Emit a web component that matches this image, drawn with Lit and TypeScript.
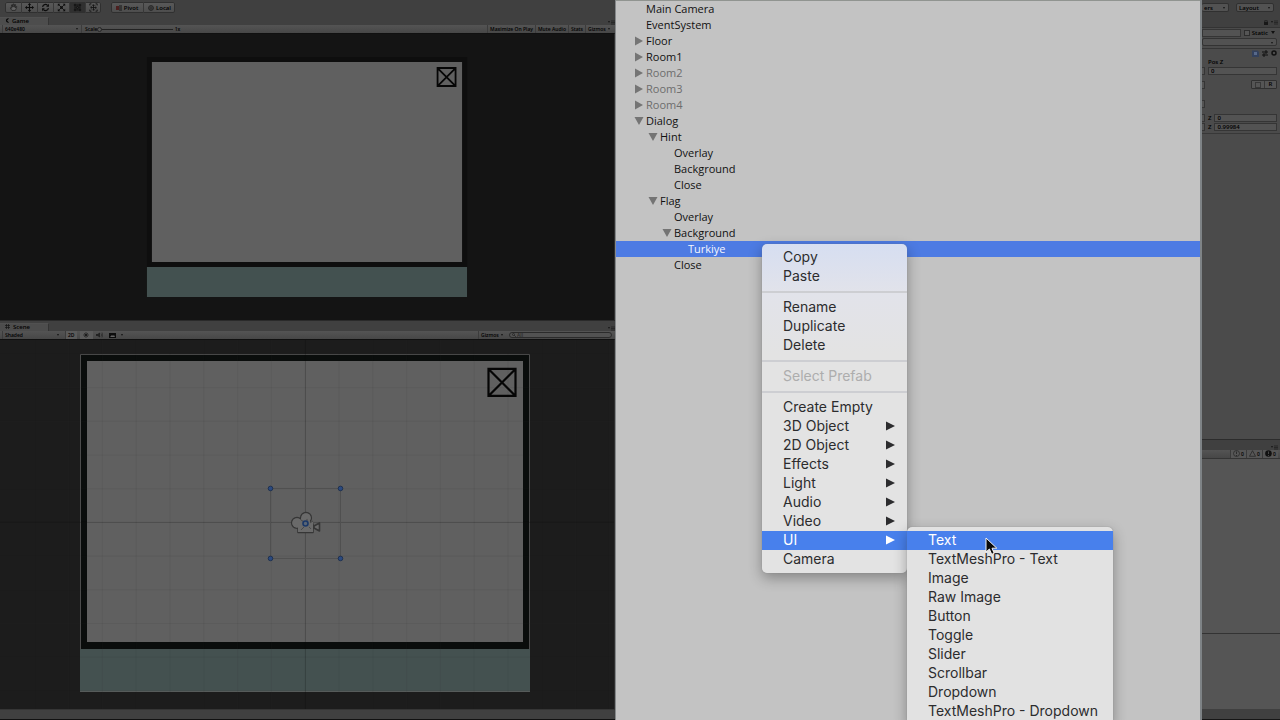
import { LitElement, html, css, svg, nothing } from "lit";
import { customElement, property } from "lit/decorators.js";
import { classMap } from "lit/directives/class-map.js";
import { styleMap } from "lit/directives/style-map.js";

const controls = css`
  *, *::before, *::after { box-sizing: border-box; }
  button, select, input {
    appearance: none; margin: 0; padding: 0; border: 0; border-radius: 0;
    background: none; color: inherit; font: inherit; min-width: 0; outline: none;
  }
  svg { display: block; flex: none; }
  .strip { display: flex; flex: none; align-items: flex-end; justify-content: space-between; background: #404040; }
  .tab {
    display: flex; align-items: center; gap: 3px; width: 49px; height: 8px; padding-left: 5px;
    padding-bottom: 2px; line-height: 6px; background: #4d4d4d; border-right: 1px solid #343434; border-top: 1px solid #515151;
  }
  .bar {
    display: flex; flex: none; height: 8px; padding-left: 2px; padding-right: 2px;
    background: linear-gradient(#545454, #474747); font-size: 5px; line-height: 8px;
  }
  .field { position: relative; display: flex; align-items: center; }
  .field::after {
    content: ""; position: absolute; right: 3px; top: 3px;
    border: 1px solid transparent; border-top: 2px solid #151515; border-bottom: 0;
  }
`;

const menuIcon = svg`<svg width="7" height="5" viewBox="0 0 7 5"><path d="M0 1h2L1 3z" fill="#161616"/><path d="M3 1h4M3 2.5h4M3 4h4" stroke="#222" stroke-width=".8"/></svg>`;

@customElement("editor-views")
class EditorViews extends LitElement {
  static styles = [controls, css`
    :host {
      display: flex; flex-direction: column; min-width: 0; min-height: 0; background: #404040;
      color: #000; font: 600 6px/8px "Open Sans", "Noto Sans", sans-serif;
    }
    .toolbar { display: flex; flex: none; height: 16px; padding: 2px 5px; gap: 10px; }
    .group { display: flex; height: 11px; border-radius: 2px; background: linear-gradient(#5a5a5a, #4c4c4c); box-shadow: inset 0 0 0 1px #303030; }
    .tool { display: flex; align-items: center; justify-content: center; width: 16px; border-left: 1px solid #383838; }
    .tool:first-child, .mode:first-child { border-left: 0; }
    .on { background: #303030; }
    .mode { display: flex; align-items: center; justify-content: center; gap: 2px; width: 32px; border-left: 1px solid #383838; }
    .cell { padding: 0 2px; border-left: 1px solid #3c3c3c; white-space: nowrap; }
    .res { width: 80px; border-left: 1px solid #3c3c3c; border-right: 1px solid #3c3c3c; padding-left: 2px; }
    .res select { width: 100%; }
    .shaded { width: 60px; }
    .scale { display: flex; align-items: center; padding-left: 3px; }
    .scale input { width: 76px; height: 6px; }
    .scale input::-webkit-slider-runnable-track { height: 1px; background: #222; }
    .scale input::-webkit-slider-thumb { appearance: none; width: 5px; height: 5px; margin-top: -2px; border: 1px solid #252525; border-radius: 50%; background: #555; }
    .spring { flex: 1; }
    .gap { width: 3px; }
    .lit { background: #5b5b5b; }
    .icon { display: flex; align-items: center; justify-content: center; width: 13px; }
    .drop { width: 7px; }
    .gizmos { width: 28px; }
    .search { display: flex; align-items: center; width: 103px; height: 6px; margin: 1px 1px 0 3px; padding: 0 2px; gap: 1px; border: 1px solid #2b2b2b; border-radius: 3px; background: #525252; }
    .search input { width: 80%; height: 4px; line-height: 4px; }
    .search input::placeholder { color: #2b2b2b; }
    .view { min-height: 0; border-top: 1px solid #101010; border-right: 1px solid #303030; }
    .game { flex: 287; background: #141414; }
    .scene { flex: 370; background: #1c1c1c; }
    .view svg { width: 100%; height: 100%; }
    .scenestrip { border-top: 1px solid #2a2a2a; height: 11px; }
    .gamestrip { height: 9px; }
    .status { flex: none; height: 11px; border-top: 1px solid #353535; border-bottom: 1px solid #111; background: #404040; }
  `];

  render() {
    const tools = [
      svg`<path d="M3.5 9 1.5 6 2.5 5.5 3.5 6.5 3 2.5 4 2 4.7 5 5 1.2h1L6.2 5 7 1.8 8 2 7.5 6 9 4l.7.6L7.8 9z" fill="#666" stroke="#1a1a1a" stroke-width=".8"/>`,
      svg`<path d="M5.5 1v9M1 5.5h9" stroke="#0c0c0c" stroke-width="1.4"/><path d="M5.5 0 7.5 2.5h-4zM5.5 11 3.5 8.5h4zM0 5.5 2.5 3.5v4zM11 5.5 8.5 3.5v4z" fill="#0c0c0c"/>`,
      svg`<path d="M2 5a3.4 3.4 0 0 1 6-2M9 6a3.4 3.4 0 0 1-6 2" fill="none" stroke="#0c0c0c" stroke-width="1.4"/><path d="M9.7 1v3.5H6.3zM1.300 10V6.500H4.700z" fill="#0c0c0c"/>`,
      svg`<path d="M2 2 9 9M9 2 2 9" stroke="#0c0c0c"/><path d="M4 4h3v3H4z" fill="#0c0c0c"/><path d="M1 1h3L1 4zM10 1v3L7 1zM1 10V7l3 3zM10 10H7l3-3z" fill="#0c0c0c"/>`,
      svg`<path d="M2.500 1v9M8.500 1v9M1 2.500h9M1 8.500h9" stroke="#080808" stroke-width=".9"/><circle cx="5.500" cy="5.500" r="1.400" fill="none" stroke="#080808"/>`,
      svg`<path d="M5.500 2v7M2 5.500h7" stroke="#101010"/><circle cx="5.500" cy="5.500" r="3" fill="none" stroke="#101010" stroke-dasharray="2 1"/><path d="M1 3V1h2M8 1h2v2M10 8v2H8M3 10H1V8" fill="none" stroke="#101010"/>`,
    ];
    const names = ["Hand", "Move", "Rotate", "Scale", "Rect", "Transform"];
    const xs = Array.from({ length: 19 }, (_, i) => 1 + i * 33.8);
    const ys = Array.from({ length: 11 }, (_, i) => 15 + i * 33.7);
    return html`
      <div class="toolbar">
        <div class="group">${tools.map((t, i) => html`
          <button class=${classMap({ tool: true, on: i === 4 })} aria-label=${names[i]}><svg width="9" height="9" viewBox="0 0 11 11">${t}</svg></button>`)}
        </div>
        <div class="group">
          <button class="mode"><svg width="6" height="6" viewBox="0 0 6 6"><path d="M0 1h3v4H0z" fill="#4c1f1f"/><path d="M3 1h3M3 3h3M3 5h3" stroke="#181818"/></svg>Pivot</button>
          <button class="mode"><svg width="6" height="6" viewBox="0 0 6 6"><circle cx="3" cy="3" r="2.400" fill="none" stroke="#181818" stroke-width=".8"/><path d="M1 3h4M3 1v4" stroke="#181818" stroke-width=".6"/></svg>Local</button>
        </div>
      </div>
      <div class="strip gamestrip">
        <div class="tab"><svg width="4" height="5" viewBox="0 0 4 5"><path d="M4 .5A2.200 2.200 0 1 0 4 4.500L2 2.500z" fill="#080808"/></svg>Game</div>${menuIcon}
      </div>
      <div class="bar">
        <div class="field res"><select aria-label="Resolution"><option>640x480</option></select></div>
        <label class="scale">Scale<input type="range" min="1" max="5" value="1" />&nbsp;1x</label>
        <span class="spring"></span>
        <button class="cell">Maximize On Play</button>
        <button class="cell">Mute Audio</button>
        <button class="cell">Stats</button>
        <div class="field cell gizmos"><button>Gizmos</button></div>
      </div>
      <div class="view game">
        <svg viewBox="0 1 614 286" preserveAspectRatio="xMidYMid slice" aria-label="Game view">
          <path d="M147 24h320v240H147z" fill="#0e0e0e"/><path d="M152 29h310v200H152z" fill="#606060"/>
          <path d="M147 234h320v30H147z" fill="#435150"/>
          <path d="M437.500 35h18v18h-18zM437.500 35l18 18M455.500 35l-18 18" fill="none" stroke="#060606" stroke-width="1.800"/>
        </svg>
      </div>
      <div class="strip scenestrip">
        <div class="tab"><svg width="5" height="5" viewBox="0 0 5 5"><path d="M0 1.500h5M0 3.500h5M1.500 0v5M3.500 0v5" stroke="#161616" stroke-width=".7"/></svg>Scene</div>${menuIcon}
      </div>
      <div class="bar">
        <div class="field cell shaded"><select aria-label="Draw mode"><option>Shaded</option></select></div>
        <span class="gap"></span>
        <button class="cell lit">2D</button>
        <span class="gap"></span>
        <button class="icon lit" aria-label="Lighting"><svg width="6" height="6" viewBox="0 0 6 6"><path d="M3 0v6M0 3h6M1 1l4 4M5 1 1 5" stroke="#1c1c1c" stroke-width=".6"/><circle cx="3" cy="3" r="1.300" fill="#1c1c1c"/></svg></button>
        <button class="icon" aria-label="Audio"><svg width="7" height="6" viewBox="0 0 7 6"><path d="M0 2h1.500L4 .500v5L1.500 4H0z" fill="#222"/><path d="M5 1.500q1.300 1.500 0 3M6 .5q1.500 2.500 0 5" fill="none" stroke="#222" stroke-width=".6"/></svg></button>
        <button class="icon" aria-label="Effects"><svg width="7" height="5" viewBox="0 0 7 5"><path d="M0 0h7v5H0z" fill="#0d0d0d"/><path d="M1 4 3 2l1 1 1-1 1 2z" fill="#666"/></svg></button>
        <div class="field drop"></div>
        <span class="spring"></span>
        <div class="field cell gizmos"><button>Gizmos</button></div>
        <label class="search"><svg width="4" height="4" viewBox="0 0 4 4"><circle cx="1.500" cy="1.500" r="1" fill="none" stroke="#1d1d1d" stroke-width=".6"/><path d="m2 2 2 2" stroke="#1d1d1d" stroke-width=".6"/></svg><input aria-label="Search scene" placeholder="All" /></label>
      </div>
      <div class="view scene">
        <svg viewBox="0 1 614 369" preserveAspectRatio="xMidYMid slice" aria-label="Scene view">
          <path d="M80.500 15.500h449v337h-449z" fill="#0a0d0c" stroke="#4c4c4c"/>
          <path d="M87 22h436v281H87z" fill="#606060"/><path d="M80 310h450v42H80z" fill="#445150"/>
          <path d="M80 352.500h450" stroke="#5a5f5e"/>
          ${xs.map((x) => svg`<path d="M${x} 0V370" stroke="#000" stroke-opacity=".07" /><path d="M${x} 0V370" stroke="#fff" stroke-opacity=".02" />`)}
          ${ys.map((y) => svg`<path d="M0 ${y}H614" stroke="#000" stroke-opacity=".07" /><path d="M0 ${y}H614" stroke="#fff" stroke-opacity=".02" />`)}
          <path d="M305.500 0v370M0 183.500h614" stroke="#000" stroke-opacity=".16"/>
          <path d="M488.500 30h27v27h-27zM488.500 30l27 27M515.500 30l-27 27" fill="none" stroke="#050505" stroke-width="2.200"/>
          <path d="M270.500 149.500h70v70h-70z" fill="none" stroke="#505050"/>
          <g fill="#6a6a6a" stroke="#363636" stroke-width="1.600" stroke-linejoin="round">
            <circle cx="306" cy="179" r="5.300"/><circle cx="297" cy="184" r="5.300"/>
            <path d="M298 185h15v8.500h-15zM314 187l5.500-3v8l-5.500-3z"/>
          </g>
          <g fill="#6a6a6a"><circle cx="306" cy="179" r="4.800"/><circle cx="297" cy="184" r="4.800"/><path d="M298 183h15v10h-15zM301 179h9v6h-9z"/></g>
          <path d="m301 181 3 2m3-3v3m3 1 3-2m-9 6-3 3m8-3 2 2" stroke="#484848"/>
          <circle cx="305.500" cy="184.500" r="2.500" fill="#596575" stroke="#1b3868" stroke-width="1.600"/>
          ${[[270, 149], [340, 149], [270, 219], [340, 219]].map(([x, y]) => svg`<circle cx=${x + 0.5} cy=${y + 0.5} r="2.300" fill="#2b4a80" stroke="#16294a" stroke-width=".8"/>`)}
        </svg>
      </div>
      <div class="status"></div>`;
  }
}

type Arrow = "open" | "closed" | "";
interface Node { name: string; level: number; arrow: Arrow; off?: boolean; selected?: boolean; }
const n = (name: string, level: number, arrow: Arrow = "", more: Partial<Node> = {}): Node => ({ name, level, arrow, ...more });
const sceneNodes: Node[] = [
  n("Main Camera", 0), n("EventSystem", 0), n("Floor", 0, "closed"), n("Room1", 0, "closed"),
  n("Room2", 0, "closed", { off: true }), n("Room3", 0, "closed", { off: true }), n("Room4", 0, "closed", { off: true }),
  n("Dialog", 0, "open"), n("Hint", 1, "open"), n("Overlay", 2), n("Background", 2), n("Close", 2),
  n("Flag", 1, "open"), n("Overlay", 2), n("Background", 2, "open"), n("Turkiye", 3, "", { selected: true }), n("Close", 2),
];

@customElement("hierarchy-tree")
class HierarchyTree extends LitElement {
  @property({ attribute: false }) nodes: Node[] = [];
  static styles = css`
    * { box-sizing: border-box; }
    :host { display: block; border-top: 1px solid #909490; color: #111; font: 500 11px/16px "Open Sans", "Noto Sans", sans-serif; }
    .tree { list-style: none; margin: 0; padding: 0; }
    .row { display: flex; align-items: center; gap: 2px; height: 16px; padding-left: 18px; white-space: nowrap; }
    .twist { flex: none; width: 10px; height: 10px; fill: #747474; }
    .off { color: #6d6d6d; }
    .selected { background: #4d7be3; color: #f4f6ff; }
  `;
  render() {
    return html`<ul class="tree" role="tree" aria-label="Hierarchy">${this.nodes.map((d) => html`
      <li role="treeitem" aria-selected=${d.selected ? "true" : "false"} class=${classMap({ row: true, off: !!d.off, selected: !!d.selected })} style=${styleMap({ paddingLeft: `${18 + d.level * 14}px` })}>
        <svg class="twist" viewBox="0 0 10 10">${d.arrow === "open" ? svg`<path d="M.5 1h9L5 9z"/>` : d.arrow === "closed" ? svg`<path d="M1 .5v9L9 5z"/>` : nothing}</svg>${d.name}
      </li>`)}</ul>`;
  }
}

const createItems = ["3D Object", "2D Object", "Effects", "Light", "Audio", "Video"];
const uiItems = ["TextMeshPro - Text", "Image", "Raw Image", "Button", "Toggle", "Slider", "Scrollbar", "Dropdown", "TextMeshPro - Dropdown"];

@customElement("context-menu")
class ContextMenu extends LitElement {
  static styles = css`
    * { box-sizing: border-box; }
    :host { display: block; font: 14px/17px Inter, Roboto, sans-serif; color: #2c2c2e; }
    .menu { padding: 4px 0; width: 145px; border-radius: 5px; background: linear-gradient(#d6def1, #e2e3ea 50px, #e3e3e3 110px); box-shadow: 0 0 1px #777, 0 5px 14px rgba(0, 0, 0, .32); }
    .sub { position: absolute; left: 100%; top: -4px; width: 206px; background: #e2e2e2; }
    .item {
      display: flex; align-items: center; justify-content: space-between; width: 100%; height: 19px;
      margin: 0; padding: 0 12px 2px 21px; border: 0; background: none; color: inherit; font: inherit; text-align: left; white-space: nowrap;
    }
    .item:disabled { color: #adadad; }
    .active { background: #4880ec; color: #fff; }
    .line { height: 2px; margin: 5px 0; border: 0; background: #cdced2; }
    .host { position: relative; }
    .arrow { width: 9px; height: 10px; fill: currentColor; }
    .cursor { position: absolute; z-index: 1; left: 78px; top: 6px; }
  `;
  item(label: string, arrow = false, active = false, disabled = false) {
    return html`<button role="menuitem" class=${classMap({ item: true, active })} ?disabled=${disabled}>${label}${arrow ? svg`<svg class="arrow" viewBox="0 0 9 10"><path d="M0 .5v9L9 5z"/></svg>` : nothing}</button>`;
  }
  render() {
    return html`<div class="menu" role="menu">
      ${["Copy", "Paste"].map((t) => this.item(t))}
      <hr class="line" />
      ${["Rename", "Duplicate", "Delete"].map((t) => this.item(t))}
      <hr class="line" />
      ${this.item("Select Prefab", false, false, true)}
      <hr class="line" />
      ${this.item("Create Empty")}
      ${createItems.map((t) => this.item(t, true))}
      <div class="host">
        ${this.item("UI", true, true)}
        <div class="menu sub" role="menu">
          <div class="host">
            ${this.item("Text", false, true)}
            <svg class="cursor" width="13" height="19" viewBox="0 0 13 19"><path d="M1 1v14l3.400-3 2.300 5.300 2.500-1L7 11.200h4.800z" fill="#0a0a0a" stroke="#f2f2f2"/></svg>
          </div>
          ${uiItems.map((t) => this.item(t))}
        </div>
      </div>
      ${this.item("Camera")}
    </div>`;
  }
}

@customElement("inspector-column")
class InspectorColumn extends LitElement {
  static styles = [controls, css`
    :host { display: flex; flex-direction: column; min-width: 0; min-height: 0; overflow: hidden; background: #404040; color: #000; font: 600 6px/8px "Open Sans", "Noto Sans", sans-serif; }
    .top { display: flex; gap: 7px; height: 18px; padding: 3px 6px 0 0; }
    .drop { flex: 1; height: 9px; border: 1px solid #303030; border-radius: 2px; background: #525252; }
    .drop select { width: 100%; padding-left: 2px; }
    .short { flex: none; width: 27px; border-left: 0; }
    .head { height: 9px; padding: 0 2px 2px; justify-content: flex-end; gap: 3px; }
    .body { display: flex; flex-direction: column; flex: 412; min-height: 0; background: #4b4b4b; border-top: 1px solid #333; }
    .row { display: flex; flex: none; align-items: center; height: 9px; gap: 3px; padding-right: 3px; }
    .text { height: 8px; border: 1px solid #353535; background: #535353; padding-left: 2px; line-height: 6px; }
    .grow { flex: 1; }
    .stub { width: 3px; border-left: 0; padding: 0; }
    .check { display: flex; align-items: center; gap: 2px; }
    .check input { width: 6px; height: 6px; border: 1px solid #2d2d2d; background: #555; }
    .tri { border: 2px solid transparent; border-top: 3px solid #111; border-bottom: 0; margin-right: 2px; }
    .full { display: flex; flex: none; height: 8px; margin: 1px 3px 2px 0; border: 1px solid #333; border-radius: 2px; background: #525252; }
    .full select { width: 100%; }
    .icons { justify-content: flex-end; border-top: 1px solid #353535; }
    .posz { padding-left: 6px; }
    .space { height: 5px; flex: none; }
    .between { justify-content: space-between; }
    .pair { display: flex; height: 9px; border: 1px solid #303030; border-radius: 1px; background: #555; }
    .pair button { display: flex; align-items: center; justify-content: center; width: 12px; line-height: 7px; }
    .pair button + button { border-left: 1px solid #383838; }
    .end { height: 3px; border-bottom: 1px solid #383838; }
    .consolehead { height: 11px; border-top: 1px solid #2c2c2c; padding-right: 2px; }
    .consolebar { justify-content: flex-end; height: 9px; border-bottom: 1px solid #343434; }
    .count { display: flex; align-items: center; gap: 1px; width: 16px; padding-left: 2px; border-left: 1px solid #3b3b3b; background: #565656; }
    .log { flex: 175; background: #555; min-height: 0; }
    .detail { flex: 75; background: #555; border-top: 1px solid #333; min-height: 0; }
    .status { flex: none; height: 11px; background: #404040; border-bottom: 1px solid #161616; }
  `];
  render() {
    return html`
      <div class="top">
        <div class="field drop short"><select aria-label="Layers"><option>ers</option></select></div>
        <div class="field drop"><select aria-label="Layout"><option>Layout</option></select></div>
      </div>
      <div class="strip head"><svg width="4" height="5" viewBox="0 0 4 5"><path d="M0 2h4v3H0z" fill="#181818"/><path d="M.7 2V.7h2.600V2" fill="none" stroke="#181818" stroke-width=".7"/></svg>${menuIcon}</div>
      <div class="body">
        <div class="row">
          <input class="text grow" aria-label="Object name" />
          <label class="check"><input type="checkbox" />Static</label><span class="tri"></span>
        </div>
        <div class="field full"><select aria-label="Layer"><option></option></select></div>
        <div class="row icons">
          <svg width="7" height="7" viewBox="0 0 7 7"><path d="M0 .5h5.500L7 2v5H0z" fill="#33415d"/><path d="M2 2h3v3H2z" fill="#58698a"/></svg>
          <svg width="6" height="7" viewBox="0 0 6 7"><path d="M0 2h6M0 5h6M4 0v4M2 3v4" stroke="#111" stroke-width="1"/></svg>
          <svg width="6" height="7" viewBox="0 0 6 7"><circle cx="3" cy="3" r="2" fill="none" stroke="#111" stroke-width="1.500"/></svg>
        </div>
        <div class="row posz">Pos Z</div>
        <div class="row"><input class="text stub" aria-label="Pos Y" /><input class="text grow" aria-label="Pos Z" value="0" /></div>
        <span class="space"></span>
        <div class="row between"><input class="text stub" aria-label="Height" />
          <div class="pair"><button aria-label="Blueprint mode"><svg width="6" height="6" viewBox="0 0 6 6"><path d="M.5.500h5v5h-5z" fill="none" stroke="#1c1c1c" stroke-dasharray="1 1"/></svg></button><button>R</button></div>
        </div>
        <span class="space"></span><span class="space"></span>
        <div class="row"><input class="text stub" aria-label="Anchor" /></div>
        <span class="space"></span>
        <div class="row"><input class="text stub" aria-label="Rotation Y" /><label for="rz">Z</label><input id="rz" class="text grow" value="0" /></div>
        <div class="row"><input class="text stub" aria-label="Scale Y" /><label for="sz">Z</label><input id="sz" class="text grow" value="0.99984" /></div>
        <div class="end"></div>
      </div>
      <div class="strip consolehead"><span></span>${menuIcon}</div>
      <div class="bar consolebar">
        <button class="count"><svg width="7" height="7" viewBox="0 0 7 7"><circle cx="3.500" cy="3.500" r="3" fill="none" stroke="#222" stroke-width=".7"/><path d="M3.500 1.500v2.500M3.500 5v1" stroke="#222" stroke-width=".8"/></svg>0</button>
        <button class="count"><svg width="7" height="7" viewBox="0 0 7 7"><path d="M3.500.7 6.500 6.300h-6z" fill="none" stroke="#222" stroke-width=".7"/></svg>0</button>
        <button class="count"><svg width="7" height="7" viewBox="0 0 7 7"><circle cx="3.500" cy="3.500" r="3.300" fill="#111"/><path d="M3.500 1.500v2.500M3.500 5v1" stroke="#555" stroke-width=".8"/></svg>0</button>
      </div>
      <div class="log"></div><div class="detail"></div><div class="status"></div>`;
  }
}

@customElement("app-root")
class AppRoot extends LitElement {
  static styles = css`
    :host { display: block; height: 100vh; overflow: hidden; background: #404040; }
    .editor { display: grid; grid-template-columns: 615fr 587fr 78fr; grid-template-rows: minmax(0, 1fr); height: 100%; }
    .hierarchy { position: relative; min-width: 0; background: #c3c3c3; border-left: 1px solid #85888a; border-right: 2px solid #7e8386; }
    .popup { position: absolute; left: 146px; top: 244px; }
  `;
  render() {
    return html`<main class="editor">
      <editor-views></editor-views>
      <section class="hierarchy"><hierarchy-tree .nodes=${sceneNodes}></hierarchy-tree><context-menu class="popup"></context-menu></section>
      <inspector-column></inspector-column>
    </main>`;
  }
}
